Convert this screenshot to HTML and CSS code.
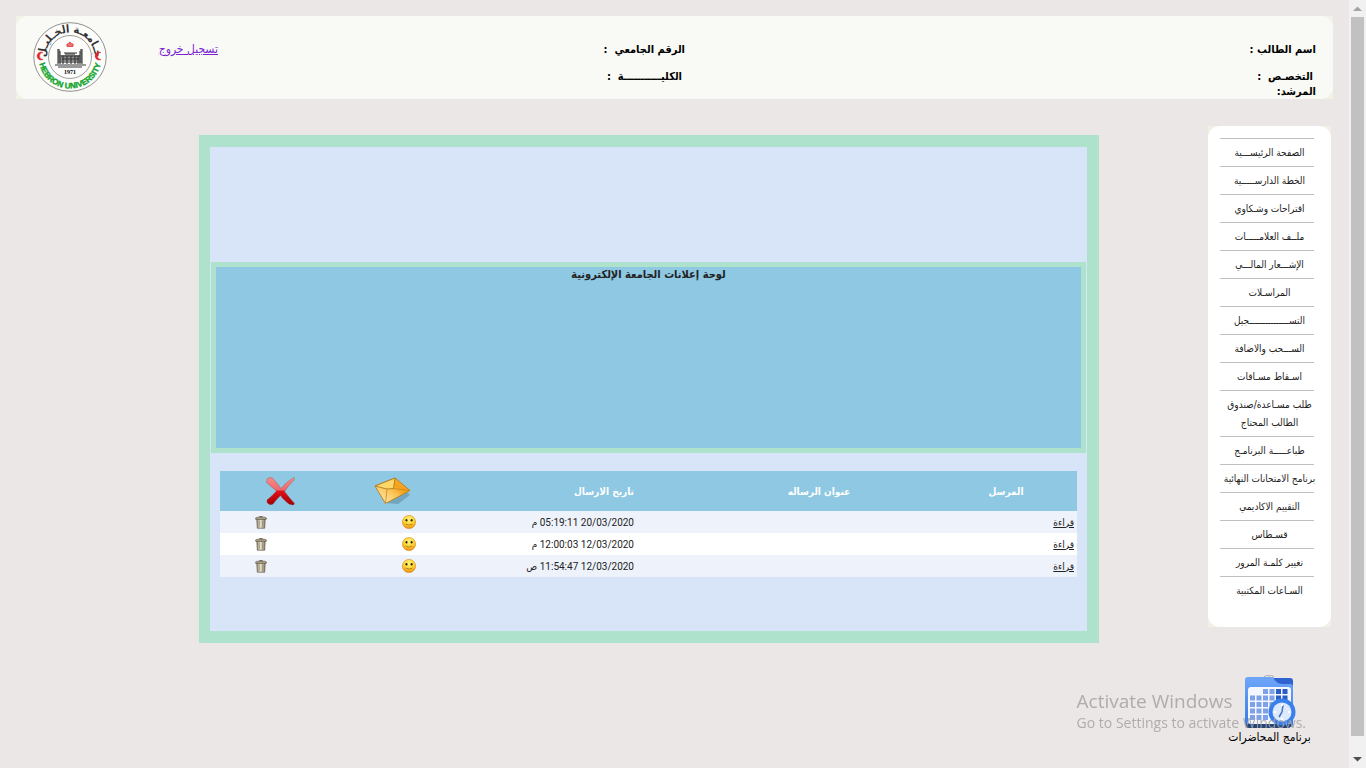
FILE: index.html
```html
<!DOCTYPE html>
<html lang="ar" dir="rtl">
<head>
<meta charset="utf-8">
<title>بوابة الطالب</title>
<link rel="stylesheet" href="styles.css">
</head>
<body>
<svg class="defs" aria-hidden="true">
  <defs>
    <linearGradient id="red" x1="0" y1="0" x2="0" y2="1"><stop offset="0" stop-color="#fb8d8d"/><stop offset=".45" stop-color="#f0686c"/><stop offset=".5" stop-color="#e01218"/><stop offset="1" stop-color="#a30006"/></linearGradient>
    <linearGradient id="gold" x1="0" y1="1" x2="1" y2="0"><stop offset="0" stop-color="#fff0c4"/><stop offset=".45" stop-color="#fbc75c"/><stop offset=".65" stop-color="#f5a11a"/><stop offset="1" stop-color="#f7b33a"/></linearGradient>
    <radialGradient id="face" cx=".5" cy=".3" r=".7"><stop offset="0" stop-color="#fff27c"/><stop offset=".6" stop-color="#fdd22e"/><stop offset="1" stop-color="#e8870e"/></radialGradient>
    <linearGradient id="can"><stop offset="0" stop-color="#958b76"/><stop offset=".4" stop-color="#ece6d0"/><stop offset="1" stop-color="#8b806c"/></linearGradient>
    <linearGradient id="folder" x1="0" y1="0" x2="0" y2="1"><stop offset="0" stop-color="#6fa6f8"/><stop offset="1" stop-color="#3478e6"/></linearGradient>
    <symbol id="smile" viewBox="0 0 14 14">
      <circle cx="7" cy="7" r="6.6" fill="url(#face)" stroke="#d98d20" stroke-width=".6"/>
      <ellipse cx="4.5" cy="5.3" rx="1" ry="1.3" fill="#2f2405"/><ellipse cx="9.6" cy="5.3" rx="1" ry="1.3" fill="#2f2405"/>
      <path d="M3.600 9Q7 11.300 10.400 9" fill="none" stroke="#a8690f" stroke-width=".8"/>
    </symbol>
    <symbol id="trash" viewBox="0 0 12 13">
      <path d="M1.8 3h8.400l-.5 9.200H2.300z" fill="url(#can)" stroke="#5f5645" stroke-width=".7"/>
      <path d="M4.300 4.500v6.300M7.600 4.500v6.300" stroke="#8d836b" stroke-width=".7"/>
      <path d="M.7 3.300V1.900l2-.7h6.600l2 .7v1.400z" fill="#b3a88e" stroke="#5f5645" stroke-width=".7"/><path d="M4.400.7h3.200" stroke="#5f5645"/>
    </symbol>
  </defs>
</svg>

<div class="page">
  <header class="topbar">
    <div class="topbar-panel">
      <dl class="student">
        <dt>اسم الطالب :</dt>
        <dt class="indent">التخصـص &nbsp;:</dt>
        <dt>المرشد:</dt>
      </dl>
      <dl class="student">
        <dt>الرقم الجامعي &nbsp;:</dt>
        <dt class="indent">الكليـــــــــــة &nbsp;:</dt>
      </dl>
      <div class="logout"><a href="#logout">تسجيل خروج</a></div>
      <svg class="logo" viewBox="0 0 74 70" role="img" aria-label="Hebron University">
        <defs>
          <path id="arcTop" d="M12.500 35A24.500 24.500 0 0 1 61.500 35"/>
          <path id="arcBottom" d="M5.500 35A31.500 31.500 0 0 0 68.500 35"/>
        </defs>
        <ellipse cx="37" cy="35" rx="36.200" ry="34.300" fill="#fdfdfc" stroke="#85857f" stroke-width=".9"/>
        <circle cx="37" cy="35" r="21.500" fill="none" stroke="#85857f" stroke-width=".8"/>
        <text class="logo-arabic" direction="rtl"><textPath href="#arcTop" startOffset="50%">جـامعـة الخـليـل</textPath></text>
        <text class="logo-latin" direction="ltr"><textPath href="#arcBottom" startOffset="50%">HEBRON UNIVERSITY</textPath></text>
        <path d="M10 30.500a4 4 0 1 0 0 7a3.400 3.400 0 0 1 0-7M68 30.500a4 4 0 1 0 0 7a3.400 3.400 0 0 1 0-7" fill="#e3242b" stroke="#e3242b" stroke-width=".5"/>
        <path d="M34 24.500q-1-3 1.500-3q1-3 3 0q2.500 0 1.500 3z" fill="#e87575" stroke="#df3737" stroke-width=".8"/>
        <path d="M25 27h2v6h5v-2h10v2h5v-6h2v14H25z" fill="#8b8b8b"/>
        <path d="M25 27v15M27 29v13M49 27v15M47 29v13M31 31h13M28 34h19M29 37h17M30 34v8M34 34v8M38 34v8M42 34v8M45 34v8M22 43h31M25 45h24" fill="none" stroke="#363636" stroke-width="1.100"/>
        <text class="logo-year" x="37" y="52" direction="ltr">1971</text>
      </svg>
    </div>
  </header>

  <div class="columns">
    <aside class="side">
      <nav class="menu">
        <ul class="menu-list">
          <li><a href="#home">الصفحة الرئيســـية</a></li>
          <li><a href="#plan">الخطة الدارســـــية</a></li>
          <li><a href="#suggest">اقتراحات وشـكاوي</a></li>
          <li><a href="#marks">ملــف العلامـــــات</a></li>
          <li><a href="#finance">الإشـــعار المالـــي</a></li>
          <li><a href="#mail">المراسـلات</a></li>
          <li><a href="#register">التســـــــــــــــجيل</a></li>
          <li><a href="#adddrop">الســـحب والاضافة</a></li>
          <li><a href="#drop">اسـقاط مسـاقات</a></li>
          <li><a href="#aid">طلب مسـاعدة/صندوق الطالب المحتاج</a></li>
          <li><a href="#print">طباعـــــة البرنامـج</a></li>
          <li><a href="#finals">برنامج الامتحانات النهائية</a></li>
          <li><a href="#eval">التقييم الاكاديمي</a></li>
          <li><a href="#qistas">قسـطاس</a></li>
          <li><a href="#password">تغيير كلمـة المرور</a></li>
          <li><a href="#hours">السـاعات المكتبية</a></li>
        </ul>
      </nav>
      <a class="schedule" href="#schedule">
        <svg class="schedule-icon" viewBox="0 0 52 54" aria-hidden="true">
          <path d="M20 2q2-3 5-1q3-2 5 1" fill="none" stroke="#aaa" stroke-width="1"/>
          <path d="M28 3h18q3 0 3 3v18H28z" fill="#2f64d0"/>
          <path d="M1 5q0-3 3-3h25q3 7 9 7h8q3 0 3 3v37q0 3-3 3H4q-3 0-3-3z" fill="url(#folder)"/>
          <path d="M7 12h37q3 0 3 3v31q0 3-3 3H7q-3 0-3-3V15q0-3 3-3z" fill="#f4f7ff"/>
          <path d="M2 49h45v1q0 3-3 3H5q-3 0-3-3z" fill="#244478"/>
          <path d="M19 14h5v5h-5zM25.500 14h5v5h-5zM6 20.500h5v5H6zM12.500 20.500h5v5h-5zM19 20.500h5v5h-5zM25.500 20.500h5v5h-5zM6 27h5v5H6zM12.500 27h5v5h-5zM19 27h5v5h-5zM25.500 27h5v5h-5zM6 33.500h5v5H6zM12.500 33.500h5v5h-5zM19 33.500h5v5h-5zM6 40h5v5H6zM12.500 40h5v5h-5zM19 40h5v5h-5z" fill="#7fa1e8"/>
          <path d="M32 14h5v5h-5zM38.500 14h5v5h-5zM32 20.500h5v5h-5zM38.500 20.500h5v5h-5z" fill="#2b5ec4"/>
          <circle cx="38" cy="37" r="13.500" fill="#3a80ec"/><circle cx="38" cy="37" r="9.500" fill="#dce9ff"/>
          <path d="M38 37l1-7M38 37l-3 5" stroke="#4b74b8" stroke-width="1.500"/>
          <path d="M38 29v2M38 43v2M30 37h2M44 37h2" stroke="#fff" stroke-width="2"/>
        </svg>
        <span>برنامج المحاضرات</span>
      </a>
    </aside>

    <main class="frame">
      <section class="notice"><h1>لوحة إعلانات الجامعة الإلكترونية</h1></section>
      <table class="messages">
        <colgroup><col class="c-sender"><col class="c-title"><col class="c-date"><col class="c-state"><col class="c-delete"></colgroup>
        <thead>
          <tr>
            <th scope="col">المرسل</th>
            <th scope="col">عنوان الرساله</th>
            <th scope="col" class="date">تاريخ الارسال</th>
            <th scope="col" class="icon-head">
              <svg class="head-icon" viewBox="0 0 48 36" role="img" aria-label="الحالة">
                <path d="M17 30l21-11 3 3-12 9z" fill="#4e7d93" opacity=".45"/>
                <path d="M6 13L26 5L41 17.500L16.500 30.500z" fill="url(#gold)" stroke="#bd7b17" stroke-width=".9"/>
                <path d="M6 13L26 5L24.500 15.500L18 16z" fill="#ffd869" stroke="#ad7a23" stroke-width=".9"/>
                <path d="M18 16L16.500 30M24.500 15.500L41 17.500" stroke="#c88820" stroke-width=".8"/>
              </svg>
            </th>
            <th scope="col" class="icon-head">
              <svg class="head-icon" viewBox="0 0 48 36" role="img" aria-label="حذف">
                <path d="M11 6q3-3 6-.5Q22 11 25 15.500Q30 9 38 4.500l.5 2Q32 13 28.500 18.500Q34 25.500 38.500 30.500l-1 1.500q-4 .5-7-3Q26 25 24.500 22.500Q20 27 17 31q-3 2-6-1.500v-2.500Q16 23 20.500 18Q15 13.500 10.500 9.500z" fill="url(#red)" stroke="#7f4548" stroke-opacity=".5" stroke-width=".7"/>
              </svg>
            </th>
          </tr>
        </thead>
        <tbody>
          <tr>
            <td><a href="#m1">قراءة</a></td><td></td><td class="date">20/03/2020 05:19:11 م</td>
            <td><svg class="smile"><use href="#smile"/></svg></td>
            <td class="delete"><button type="button" aria-label="حذف"><svg class="trash"><use href="#trash"/></svg></button></td>
          </tr>
          <tr>
            <td><a href="#m2">قراءة</a></td><td></td><td class="date">12/03/2020 12:00:03 م</td>
            <td><svg class="smile"><use href="#smile"/></svg></td>
            <td class="delete"><button type="button" aria-label="حذف"><svg class="trash"><use href="#trash"/></svg></button></td>
          </tr>
          <tr>
            <td><a href="#m3">قراءة</a></td><td></td><td class="date">12/03/2020 11:54:47 ص</td>
            <td><svg class="smile"><use href="#smile"/></svg></td>
            <td class="delete"><button type="button" aria-label="حذف"><svg class="trash"><use href="#trash"/></svg></button></td>
          </tr>
        </tbody>
      </table>
    </main>
  </div>
</div>

<div class="scrollbar" aria-hidden="true">
  <svg class="arrow" viewBox="0 0 17 17"><path d="M4 11l4.500-4.500L13 11z" fill="#a3a3a3"/></svg>
  <div class="track"><div class="thumb"></div></div>
  <svg class="arrow" viewBox="0 0 17 17"><path d="M4 6l4.500 4.500L13 6z" fill="#505050"/></svg>
</div>

<div class="watermark" dir="ltr" lang="en">
  <p class="watermark-title">Activate Windows</p>
  <p class="watermark-text">Go to Settings to activate Windows.</p>
</div>
</body>
</html>
```
FILE: styles.css
```css
* { box-sizing: border-box; }

body {
  margin: 0;
  display: flex;
  min-height: 100vh;
  background: #ebe7e6;
  color: #000;
  font-family: "DejaVu Sans Condensed", "DejaVu Sans", sans-serif;
  font-size: 11px;
}

.defs { position: absolute; width: 0; height: 0; }

.page { flex: 1; min-width: 0; order: 2; padding: 16px 16px 0; }

/* Header */
.topbar { background: #f2f1e5; }
.topbar-panel {
  display: grid;
  grid-template-columns: 631fr 467fr 111fr 74px;
  min-height: 83px;
  padding: 0 17px;
  background: #f9faf5;
  border-radius: 12px;
}
.student {
  display: flex;
  flex-direction: column;
  margin: 0;
  padding-top: 26px;
  font-weight: bold;
  line-height: 15px;
}
.student .indent { margin-top: 12px; padding-inline-start: 3px; }
.logout { padding-top: 26px; line-height: 15px; }
.logout a { color: #7a1fd1; font-size: 12px; }
.logo { width: 74px; height: 70px; margin-top: 6px; }
.logo-arabic { font-size: 11px; font-weight: bold; text-anchor: middle; fill: #333; }
.logo-latin {
  font-family: "Liberation Sans", sans-serif;
  font-size: 8px;
  font-weight: bold;
  text-anchor: middle;
  fill: #16a62f;
  stroke: #16a62f;
  stroke-width: .4px;
}
.logo-year { font-family: "Liberation Serif", serif; font-size: 6px; font-weight: bold; text-anchor: middle; }

/* Body columns */
.columns {
  display: flex;
  align-items: flex-start;
  margin-top: 27px;
  padding-inline-start: 2px;
}
.side { display: flex; flex-direction: column; flex: 0 0 123px; }
.menu { background: #f0f1e4; }
.menu-list {
  margin: 0;
  padding: 12px 0 23px 0;
  list-style: none;
  background: #fff;
  border-radius: 12px;
}
.menu-list li { padding: 0 12px; text-align: center; line-height: 18px; }
.menu-list li::before {
  content: "";
  display: block;
  margin-inline-start: 5px;
  border-top: 1px solid #c0c0c0;
}
.menu-list a {
  display: block;
  padding: 5px 0 4px;
  color: #222;
  font-size: 10px;
  text-decoration: none;
}
.schedule {
  display: flex;
  flex-direction: column;
  align-items: center;
  margin-top: 48px;
  color: #000;
  font-size: 12px;
  line-height: 16px;
  text-decoration: none;
}
.schedule-icon { width: 52px; height: 54px; }

/* Main panel */
.frame {
  flex: 1;
  min-width: 0;
  min-height: 508px;
  margin: 9px 109px 0 183px;
  padding: 115px 0 54px;
  border: 12px solid #aee2cd;
  border-left-width: 11px;
  background: #d8e4f8;
}
.notice {
  min-height: 191px;
  margin: 0 1px;
  border: 5px solid #aee2cd;
  background: #8ec8e2;
  text-align: center;
}
.notice h1 { margin: 0; color: #222; font-size: 11px; line-height: 15px; }

.messages {
  width: calc(100% - 20px);
  margin: 18px 10px 0;
  border-collapse: collapse;
  table-layout: fixed;
  font-size: 10px;
  color: #222;
}
.c-sender { width: 142px; }
.c-title { width: 232px; }
.c-date { width: 284px; }
.c-state { width: 113px; }
.c-delete { width: 86px; }
.messages th, .messages td { padding: 0 3px; text-align: start; }
.messages thead tr { height: 40px; background: #8ec8e2; color: #fff; }
.messages th { text-align: center; }
.messages tbody tr { height: 22px; background: #eef3fb; }
.messages tbody tr:nth-child(even) { background: #fff; }
.messages .date { padding-inline-start: 69px; text-align: start; }
.messages td.date { font-family: Roboto, "DejaVu Sans Condensed", "DejaVu Sans", sans-serif; }
.messages .icon-head { padding: 0 2px; text-align: start; }
.messages .delete { text-align: center; padding: 0 4px 0 0; }
.messages a { color: #222; }
.messages svg { display: block; }
.messages button { padding: 0; border: 0; background: none; vertical-align: middle; }
.head-icon { width: 48px; height: 36px; }
.smile { width: 14px; height: 14px; }
.trash { width: 12px; height: 13px; }

/* Window scrollbar */
.scrollbar {
  order: 1;
  display: flex;
  flex-direction: column;
  width: 17px;
  height: 100vh;
  background: #f1f1f1;
}
.arrow { width: 17px; height: 17px; }
.track { flex: 1; padding: 0 2px; }
.thumb { height: 98%; background: #c1c1c1; }

/* Overlay in the window corner */
.watermark {
  position: fixed;
  right: 60px;
  bottom: 35px;
  color: #a4a2a2;
  opacity: .85;
  font-family: "Open Sans", "Noto Sans", sans-serif;
  pointer-events: none;
}
.watermark p { margin: 0; }
.watermark-title { font-size: 19px; line-height: 24px; }
.watermark-text { font-size: 14px; line-height: 20px; }
```
